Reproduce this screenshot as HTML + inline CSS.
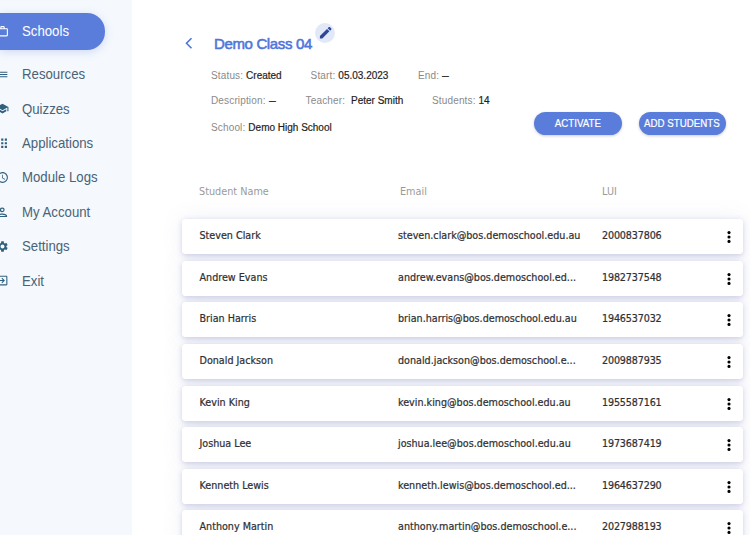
<!DOCTYPE html>
<html lang="en">
<head>
<meta charset="utf-8">
<title>Demo Class 04</title>
<style>
  html, body { margin: 0; padding: 0; }
  body {
    width: 750px; height: 535px; overflow: hidden; position: relative;
    background: #ffffff;
    font-family: "Liberation Sans", sans-serif;
  }
  /* ---------- sidebar ---------- */
  .sidebar {
    position: absolute; left: 0; top: 0; width: 132px; height: 535px;
    background: #f5f9fd;
  }
  .nav-item {
    position: absolute; left: 0; height: 37px; width: 132px;
    color: #4a6275; font-size: 14.6px; line-height: 37px;
    white-space: nowrap;
  }
  .nav-item .lbl { position: absolute; left: 22px; top: 0.4px; transform: scaleX(0.905); transform-origin: 0 50%; }
  .nav-item svg { position: absolute; left: -4.1px; top: 12px; width: 13px; height: 13px; fill: #31607f; }
  .nav-item.active {
    width: 105px; background: #5a7ddb; color: #fff;
    border-radius: 0 18px 18px 0;
    box-shadow: 0 2px 8px rgba(90,125,219,0.25);
  }
  .nav-item.active svg { fill: #fff; }

  /* ---------- header ---------- */
  .back { position: absolute; left: 185px; top: 37.4px; width: 8px; height: 12.4px; }
  .title {
    position: absolute; left: 214px; top: 34.8px; font-size: 15px; font-weight: normal;
    color: #5075da; line-height: 18px; white-space: nowrap;
    -webkit-text-stroke: 0.55px #5075da; letter-spacing: -0.36px;
  }
  .edit {
    position: absolute; left: 314.9px; top: 22.9px; width: 19.9px; height: 19.9px; border-radius: 50%;
    background: #e1e8f7;
  }
  .edit svg { position: absolute; left: 2.8px; top: 1.8px; width: 15.4px; height: 15.4px; }
  .meta { position: absolute; font-size: 10px; line-height: 12px; color: #8a8a8a; white-space: nowrap; letter-spacing: 0.15px; }
  .meta b { color: #1f1f1f; font-weight: normal; letter-spacing: 0; -webkit-text-stroke: 0.2px #1f1f1f; }
  .meta i { display: inline-block; font-style: normal; transform: scaleX(0.68); transform-origin: 0 50%; }
  .btn {
    position: absolute; top: 111.7px; height: 23.3px; border-radius: 12px; background: #5a7ddb;
    color: #fff; font-size: 10.5px; line-height: 23.3px; text-align: center; white-space: nowrap;
    box-shadow: 0 1px 3px rgba(0,0,0,0.2);
  }
  .btn span { display: inline-block; transform: scaleX(0.925); -webkit-text-stroke: 0.2px #fff; }

  /* ---------- table ---------- */
  .tbl { font-family: "DejaVu Sans", "Liberation Sans", sans-serif; }
  .th { position: absolute; top: 185.7px; font-size: 9.7px; line-height: 12px; color: #9a9a9a; white-space: nowrap; }
  .row {
    position: absolute; left: 181.5px; width: 561.3px; height: 35px; background: #fff; border-radius: 4px;
    font-size: 9.6px; line-height: 33.6px; color: #303034; white-space: nowrap;
    -webkit-text-stroke: 0.22px #303034;
  }
  .sh {
    position: absolute; left: 181.5px; width: 561.3px; height: 35px; border-radius: 4px;
    box-shadow: 0 1.5px 5px rgba(90,100,170,0.25), 0 0 22px rgba(95,105,180,0.10);
  }
  .row span { position: absolute; top: 0; }
  .row .c1 { left: 18px; }
  .row .c2 { left: 216.5px; }
  .row .c3 { left: 420.5px; letter-spacing: -0.15px; }
  .row .dots { position: absolute; left: 545.5px; top: 11px; width: 4px; height: 14px; }
</style>
</head>
<body>

<div class="sidebar">
  <div class="nav-item active" style="top:13px"><svg viewBox="0 0 24 24"><path d="M20 6h-4V4c0-1.1-.9-2-2-2h-4c-1.1 0-2 .9-2 2v2H4c-1.1 0-2 .9-2 2v11c0 1.1.9 2 2 2h16c1.1 0 2-.9 2-2V8c0-1.100-.9-2-2-2zm-10-2h4v2h-4V4zm10 15H4V8h16v11z"/></svg><span class="lbl">Schools</span></div>
  <div class="nav-item" style="top:56px"><svg viewBox="0 0 24 24"><path d="M3 6.900h18v2H3zM3 11h18v2H3zM3 15.100h18v2H3z"/></svg><span class="lbl">Resources</span></div>
  <div class="nav-item" style="top:90.400px"><svg viewBox="0 0 24 24"><path d="M5 13.180v4L12 21l7-3.820v-4L12 17l-7-3.820zM12 3L1 9l11 6 9-4.910V17h2V9L12 3z"/></svg><span class="lbl">Quizzes</span></div>
  <div class="nav-item" style="top:124.800px"><svg viewBox="0 0 24 24" style="width:14.500px;height:14.500px;left:-5.200px;top:11px"><path d="M4.200 4.200h3.600v3.600H4.200zM10.200 4.200h3.600v3.600h-3.600zM16.200 4.200h3.600v3.600h-3.600zM4.200 10.200h3.600v3.600H4.200zM10.200 10.200h3.600v3.600h-3.600zM16.200 10.200h3.600v3.600h-3.600zM4.200 16.200h3.600v3.600H4.200zM10.200 16.200h3.600v3.600h-3.600zM16.200 16.200h3.600v3.600h-3.600z"/></svg><span class="lbl">Applications</span></div>
  <div class="nav-item" style="top:158.800px"><svg viewBox="0 0 24 24"><path d="M11.990 2C6.470 2 2 6.480 2 12s4.470 10 9.990 10C17.520 22 22 17.520 22 12S17.520 2 11.990 2zM12 20c-4.420 0-8-3.580-8-8s3.580-8 8-8 8 3.580 8 8-3.580 8-8 8zm.5-13H11v6l5.250 3.150.75-1.230-4.500-2.670z"/></svg><span class="lbl">Module Logs</span></div>
  <div class="nav-item" style="top:193.600px"><svg viewBox="0 0 24 24" style="width:14.500px;height:14.500px;left:-5.300px;top:11px"><path d="M12 4a4 4 0 1 0 0 8 4 4 0 0 0 0-8zm0 2a2 2 0 1 1 0 4 2 2 0 0 1 0-4zM4 18v2h16v-2c0-2.660-5.330-4-8-4s-8 1.340-8 4zm2 0c.2-.71 3.300-2 6-2 2.690 0 5.780 1.280 6 2H6z"/></svg><span class="lbl">My Account</span></div>
  <div class="nav-item" style="top:228px"><svg viewBox="0 0 24 24"><path d="M19.140 12.940c.04-.3.06-.61.06-.94 0-.32-.02-.64-.07-.94l2.030-1.580a.49.49 0 0 0 .12-.61l-1.920-3.320a.488.488 0 0 0-.59-.22l-2.390.96c-.5-.38-1.030-.7-1.620-.94l-.36-2.540a.484.484 0 0 0-.48-.41h-3.840c-.24 0-.43.170-.47.41l-.36 2.540c-.59.240-1.130.570-1.620.940l-2.390-.960c-.22-.080-.47 0-.59.220L2.740 8.870c-.12.210-.08.470.12.610l2.030 1.580c-.05.3-.09.630-.09.940s.02.640.07.940l-2.030 1.580a.49.49 0 0 0-.12.610l1.920 3.320c.12.220.37.290.59.220l2.390-.96c.5.380 1.030.7 1.620.94l.36 2.540c.05.240.24.410.48.410h3.840c.24 0 .44-.170.47-.41l.36-2.540c.59-.24 1.130-.56 1.620-.94l2.390.96c.22.080.47 0 .59-.22l1.920-3.320c.12-.22.070-.47-.12-.61l-2.010-1.580zM12 15.600c-1.980 0-3.600-1.620-3.600-3.600s1.620-3.600 3.600-3.600 3.600 1.620 3.600 3.600-1.620 3.600-3.600 3.600z"/></svg><span class="lbl">Settings</span></div>
  <div class="nav-item" style="top:262.400px"><svg viewBox="0 0 24 24"><path d="M10.090 15.590L11.500 17l5-5-5-5-1.410 1.410L12.670 11H3v2h9.670l-2.580 2.590zM19 3H5a2 2 0 0 0-2 2v4h2V5h14v14H5v-4H3v4a2 2 0 0 0 2 2h14c1.100 0 2-.9 2-2V5c0-1.100-.9-2-2-2z"/></svg><span class="lbl">Exit</span></div>
</div>

<svg class="back" viewBox="0 0 8 12"><path d="M6.500 1 L1.500 6 L6.500 11" fill="none" stroke="#4f74d6" stroke-width="1.600"/></svg>
<div class="title">Demo Class 04</div>
<div class="edit"><svg viewBox="0 0 24 24"><path fill="#2f4696" d="M3 17.250V21h3.750L17.810 9.940l-3.750-3.750L3 17.250zM20.710 7.040a1 1 0 0 0 0-1.410l-2.340-2.340a1 1 0 0 0-1.410 0l-1.830 1.830 3.750 3.750 1.830-1.830z"/></svg></div>

<div class="meta" style="left:211px;top:69.7px">Status: <b>Created</b></div>
<div class="meta" style="left:310.6px;top:69.7px">Start: <b>05.03.2023</b></div>
<div class="meta" style="left:418px;top:69.7px">End: <b><i>—</i></b></div>
<div class="meta" style="left:211px;top:95.4px">Description: <b><i>—</i></b></div>
<div class="meta" style="left:305.6px;top:95.4px">Teacher: &nbsp;<b>Peter Smith</b></div>
<div class="meta" style="left:432px;top:95.4px">Students: <b>14</b></div>
<div class="meta" style="left:211px;top:122.3px">School: <b>Demo High School</b></div>

<div class="btn" style="left:534px;width:87.5px"><span>ACTIVATE</span></div>
<div class="btn" style="left:638.5px;width:87.5px"><span>ADD STUDENTS</span></div>

<div class="tbl">
  <div class="th" style="left:199px">Student Name</div>
  <div class="th" style="left:400px">Email</div>
  <div class="th" style="left:602px">LUI</div>

  <div class="sh" style="top:219.1px"></div>
  <div class="sh" style="top:260.7px"></div>
  <div class="sh" style="top:302.3px"></div>
  <div class="sh" style="top:343.9px"></div>
  <div class="sh" style="top:385.5px"></div>
  <div class="sh" style="top:427.1px"></div>
  <div class="sh" style="top:468.8px"></div>
  <div class="sh" style="top:510.4px"></div>
  <div class="row" style="top:219.1px"><span class="c1">Steven Clark</span><span class="c2">steven.clark@bos.demoschool.edu.au</span><span class="c3">2000837806</span><svg class="dots" viewBox="0 0 4 14"><circle cx="2" cy="2.600" r="1.550"/><circle cx="2" cy="7" r="1.550"/><circle cx="2" cy="11.400" r="1.550"/></svg></div>
  <div class="row" style="top:260.7px"><span class="c1">Andrew Evans</span><span class="c2">andrew.evans@bos.demoschool.ed...</span><span class="c3">1982737548</span><svg class="dots" viewBox="0 0 4 14"><circle cx="2" cy="2.600" r="1.550"/><circle cx="2" cy="7" r="1.550"/><circle cx="2" cy="11.400" r="1.550"/></svg></div>
  <div class="row" style="top:302.3px"><span class="c1">Brian Harris</span><span class="c2">brian.harris@bos.demoschool.edu.au</span><span class="c3">1946537032</span><svg class="dots" viewBox="0 0 4 14"><circle cx="2" cy="2.600" r="1.550"/><circle cx="2" cy="7" r="1.550"/><circle cx="2" cy="11.400" r="1.550"/></svg></div>
  <div class="row" style="top:343.9px"><span class="c1">Donald Jackson</span><span class="c2">donald.jackson@bos.demoschool.e...</span><span class="c3">2009887935</span><svg class="dots" viewBox="0 0 4 14"><circle cx="2" cy="2.600" r="1.550"/><circle cx="2" cy="7" r="1.550"/><circle cx="2" cy="11.400" r="1.550"/></svg></div>
  <div class="row" style="top:385.5px"><span class="c1">Kevin King</span><span class="c2">kevin.king@bos.demoschool.edu.au</span><span class="c3">1955587161</span><svg class="dots" viewBox="0 0 4 14"><circle cx="2" cy="2.600" r="1.550"/><circle cx="2" cy="7" r="1.550"/><circle cx="2" cy="11.400" r="1.550"/></svg></div>
  <div class="row" style="top:427.1px"><span class="c1">Joshua Lee</span><span class="c2">joshua.lee@bos.demoschool.edu.au</span><span class="c3">1973687419</span><svg class="dots" viewBox="0 0 4 14"><circle cx="2" cy="2.600" r="1.550"/><circle cx="2" cy="7" r="1.550"/><circle cx="2" cy="11.400" r="1.550"/></svg></div>
  <div class="row" style="top:468.8px"><span class="c1">Kenneth Lewis</span><span class="c2">kenneth.lewis@bos.demoschool.ed...</span><span class="c3">1964637290</span><svg class="dots" viewBox="0 0 4 14"><circle cx="2" cy="2.600" r="1.550"/><circle cx="2" cy="7" r="1.550"/><circle cx="2" cy="11.400" r="1.550"/></svg></div>
  <div class="row" style="top:510.4px"><span class="c1">Anthony Martin</span><span class="c2">anthony.martin@bos.demoschool.e...</span><span class="c3">2027988193</span><svg class="dots" viewBox="0 0 4 14"><circle cx="2" cy="2.600" r="1.550"/><circle cx="2" cy="7" r="1.550"/><circle cx="2" cy="11.400" r="1.550"/></svg></div>
</div>

</body>
</html>
